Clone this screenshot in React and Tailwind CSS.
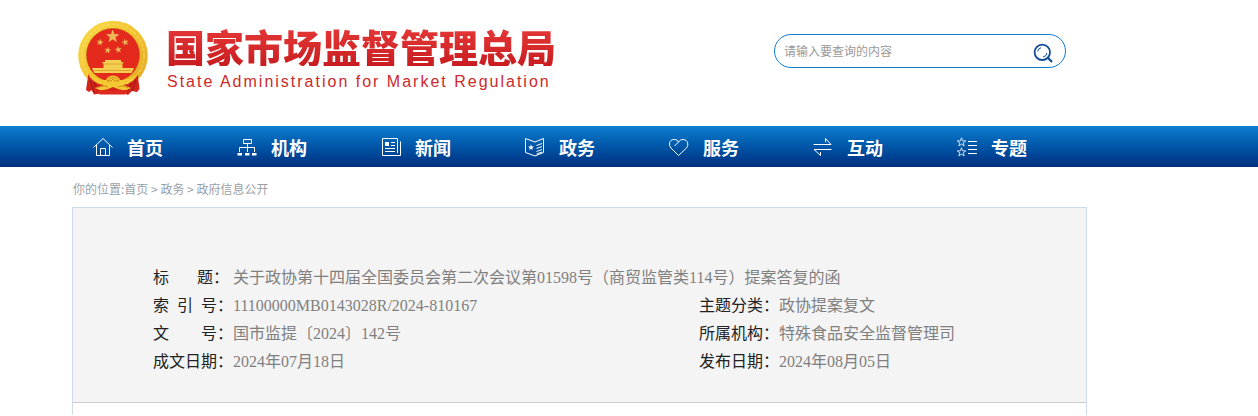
const NAV_ITEMS = [
    { label: '首页', Icon: HomeIcon },
    { label: '机构', Icon: OrgIcon },
    { label: '新闻', Icon: NewsIcon },
    { label: '政务', Icon: AffairsIcon },
    { label: '服务', Icon: HeartIcon },
    { label: '互动', Icon: ExchangeIcon },
    { label: '专题', Icon: TopicsIcon },
];

const CRUMBS = ['首页', '政务', '政府信息公开'];

// labels are padded with spaces so the colons line up
const DETAILS = [
    [{ label: '标       题：', value: '关于政协第十四届全国委员会第二次会议第01598号（商贸监管类114号）提案答复的函' }],
    [{ label: '索  引  号：', value: '11100000MB0143028R/2024-810167' }, { label: '主题分类：', value: '政协提案复文' }],
    [{ label: '文        号：', value: '国市监提〔2024〕142号' }, { label: '所属机构：', value: '特殊食品安全监督管理司' }],
    [{ label: '成文日期：', value: '2024年07月18日' }, { label: '发布日期：', value: '2024年08月05日' }],
];

const STAR = 'M0 -1L.235 -.324L.951 -.309L.38 .124L.588 .809L0 .4L-.588 .809L-.38 .124L-.951 -.309L-.235 -.324Z';

function NavSvg({ children }) {
    return (
        <svg viewBox="0 0 20 20" className="size-5 shrink-0" fill="none" stroke="currentColor" strokeWidth="1" aria-hidden="true">
            {children}
        </svg>
    );
}

function HomeIcon() {
    return (
        <NavSvg>
            <path d="M.5 10.5L10 1.5L19.5 10.5M3.5 8V18.5H16.5V8M7.5 18.5V11.5H12.5V18.5" />
        </NavSvg>
    );
}

function OrgIcon() {
    return (
        <NavSvg>
            <path d="M6.5 2.5H14.5V6.5H6.5ZM10.5 6.5V11M2.5 15V10.5H17.5V15M10.5 11V15" />
            <path d="M.5 16H5V18.5H.5ZM8 16H12.5V18.5H8ZM15 16H19.5V18.5H15Z" fill="currentColor" stroke="none" />
        </NavSvg>
    );
}

function NewsIcon() {
    return (
        <NavSvg>
            <path d="M16.5 16V1.5H1.5V18.5H19.5V4.5" />
            <path d="M4 5H8V9H4Z" fill="currentColor" stroke="none" />
            <path d="M10 5.5H14M10 8.5H14M4 11.5H14M4 14.5H14" />
        </NavSvg>
    );
}

function AffairsIcon() {
    return (
        <NavSvg>
            <path d="M.5 1.5L10 5L18.5 1.5V15.5L10 19L.5 15.5Z" />
            <path d="M11.5 8.5L17 6.5M11.5 11.5L17 9.5M11.5 14.5L17 12.5M11.5 17L17 15" />
            <path d={STAR} transform="translate(6 10.5) scale(3.2)" fill="currentColor" stroke="none" />
        </NavSvg>
    );
}

function HeartIcon() {
    return (
        <NavSvg>
            <path d="M9.5 18.5L2 11C-.5 8 0 2.5 5 2.5C7.500 2.5 9 3.5 9.500 5C10.500 3.5 12 2.5 14 2.5C19 2.5 20 8 17.500 11L9.500 18.500M9.500 5L5.500 9" />
        </NavSvg>
    );
}

function ExchangeIcon() {
    return (
        <NavSvg>
            <path d="M.5 7.5H18L12.5 1.5V5M18.5 12.5H1L7.5 18.5V15" />
        </NavSvg>
    );
}

function TopicsIcon() {
    return (
        <NavSvg>
            <path d={STAR} transform="translate(4.500 5.300) scale(4.500)" strokeWidth=".18" />
            <path d={STAR} transform="translate(4.500 15.300) scale(4.500)" strokeWidth=".18" />
            <path d="M11 4.5H20M11 8.5H20M11 12.5H20M11 16.5H20" />
        </NavSvg>
    );
}

function Emblem() {
    return (
        <svg viewBox="0 0 70 75" className="h-[75px] w-[70px] shrink-0" role="img" aria-label="国徽">
            <defs>
                <linearGradient id="gold" x1="0" y1="0" x2="1" y2="1">
                    <stop offset="0" stopColor="#f9dc4c" />
                    <stop offset=".5" stopColor="#f3c22e" />
                    <stop offset="1" stopColor="#e0a422" />
                </linearGradient>
            </defs>
            <circle cx="35" cy="35.5" r="34.8" fill="url(#gold)" />
            <circle cx="35" cy="35.5" r="31" fill="none" stroke="#fbe678" strokeWidth="2" strokeDasharray="3 1.8" opacity=".4" />
            <circle cx="35" cy="35" r="27" fill="#c9861b" />
            <circle cx="35" cy="35" r="26.5" fill="#e42a1c" />
            <g fill="#edb952" stroke="#f8dd7c" strokeWidth=".08">
                <path d={STAR} transform="translate(34.7 16.5) scale(6.2)" />
                <path d={STAR} transform="translate(22 22.3) rotate(12) scale(3.2)" />
                <path d={STAR} transform="translate(47.3 22.3) rotate(-12) scale(3.2)" />
                <path d={STAR} transform="translate(29.7 30.3) rotate(8) scale(3.2)" />
                <path d={STAR} transform="translate(40.3 29.7) rotate(-8) scale(3.2)" />
            </g>
            <path d="M27 40H43V42H45.5L44.5 44V48H56L53.5 53H16.5L14 48H25.5V44L24 42H27Z" fill="#f5cf4f" />
            <path d="M25.500 44H44.500M17 50.500H53" stroke="#dc9a2c" strokeWidth=".8" />
            <path d="M10.5 53L8 70L11 72L13.5 70L16 74.5L23 73.500H47L50 75L54 71L59 72L61.500 69L59.500 53Q50 64 35 64T10.500 53Z" fill="#d3241c" />
            <path d="M12 60L16 72M16 62L21 73M58 60L54 71M54 62L49 73" stroke="#9c1613" strokeWidth="1" fill="none" />
            <path d="M8.500 51Q18 61 28 60Q29 56 35 55.500Q41 56 42 60Q52 61 61.500 51Q56 64 45 65L53 68Q46 72 40 69L35 67L30 69Q24 72 17 68L26 65Q14 64 8.500 51Z" fill="#f5c934" />
            <path d="M29 61Q30 57.500 35 57.500T41 61L37 61L35 59L33 61ZM20 67.500Q27 65 30 67M50 67.500Q43 65 40 67" fill="none" stroke="#c77a18" strokeWidth=".8" />
            <path d="M19 71L28 69.500L35 71.500L42 69.500L51 71L47 74.500H22Z" fill="#df2a20" />
        </svg>
    );
}

function SearchIcon() {
    return (
        <svg viewBox="0 0 20 20" className="size-5" fill="none" stroke="#104a97" aria-hidden="true">
            <circle cx="9.3" cy="9.3" r="7.7" strokeWidth="1.8" />
            <path d="M14.8 14.8L19 19" strokeWidth="2.2" />
            <path d="M4.7 8.5Q5 5.5 8 4.7M10 14Q13.5 13.5 14 10" strokeWidth="1" />
        </svg>
    );
}

function Detail({ label, value, colSpan }) {
    return (
        <>
            <th scope="row" className="h-7 p-0 text-left font-normal whitespace-pre text-[#222]">{label}</th>
            <td colSpan={colSpan} className="h-7 p-0 text-[#808080]">{value}</td>
        </>
    );
}

export default function App() {
    return (
        <div className="bg-white font-['Noto_Sans_CJK_SC',sans-serif]">
            <header className="ml-[72px] flex max-w-[1015px] items-start justify-between pr-[21px] pb-[31px] pl-1.5">
                <div className="flex items-start gap-[18px] pt-5">
                    <Emblem />
                    <div className="pt-1.5">
                        <h1 className="bg-linear-to-b from-[#e63838] to-[#c81c20] bg-clip-text text-[39px] leading-10 font-black whitespace-nowrap text-transparent">
                            国家市场监督管理总局
                        </h1>
                        <p className="mt-1 pl-px font-['Liberation_Sans',sans-serif] text-base tracking-[2px] whitespace-nowrap text-[#cc2a2a]">
                            State Administration for Market Regulation
                        </p>
                    </div>
                </div>
                <form className="mt-[34px] flex h-[34px] w-[292px] items-center rounded-full border border-[#0f7dd0] pr-3 pl-[9px]" onSubmit={(e) => e.preventDefault()}>
                    <input type="text" aria-label="请输入要查询的内容" placeholder="请输入要查询的内容"
                        className="min-w-0 flex-1 text-xs outline-none placeholder:text-[#999]" />
                    <button type="submit" aria-label="搜索" className="pt-1"><SearchIcon /></button>
                </form>
            </header>

            <nav className="bg-linear-to-b from-[#0f7dd0] to-[#002f80] pl-[93px]">
                <ul className="flex">
                    {NAV_ITEMS.map(({ label, Icon }) => (
                        <li key={label} className="w-36">
                            <a href="#" className="flex h-[41px] items-center gap-3.5 text-lg font-bold text-white">
                                <Icon />
                                {label}
                            </a>
                        </li>
                    ))}
                </ul>
            </nav>

            <main className="ml-[72px] max-w-[1015px]">
                <div className="pt-3 pb-2 pl-px text-xs leading-5 text-[#9a9fa8]">
                    你的位置:
                    {CRUMBS.map((crumb, i) => (
                        <span key={crumb}>
                            {i > 0 && ' > '}
                            <a href="#">{crumb}</a>
                        </span>
                    ))}
                </div>

                <div className="border border-b-0 border-[#cfdbe9]">
                    <div className="border-b border-[#ccc] bg-[#f4f4f4] pt-14 pr-5 pb-[26px] pl-20">
                        <table className="w-full table-fixed border-collapse font-['Liberation_Serif','Noto_Sans_CJK_SC',serif] text-base leading-7">
                            <colgroup>
                                <col className="w-20" />
                                <col className="w-[466px]" />
                                <col className="w-20" />
                                <col />
                            </colgroup>
                            <tbody>
                                {DETAILS.map((row) => (
                                    <tr key={row[0].label}>
                                        {row.map((item) => (
                                            <Detail key={item.label} {...item} colSpan={row.length === 1 ? 3 : 1} />
                                        ))}
                                    </tr>
                                ))}
                            </tbody>
                        </table>
                    </div>
                    <div className="h-3" />
                </div>
            </main>
        </div>
    );
}
